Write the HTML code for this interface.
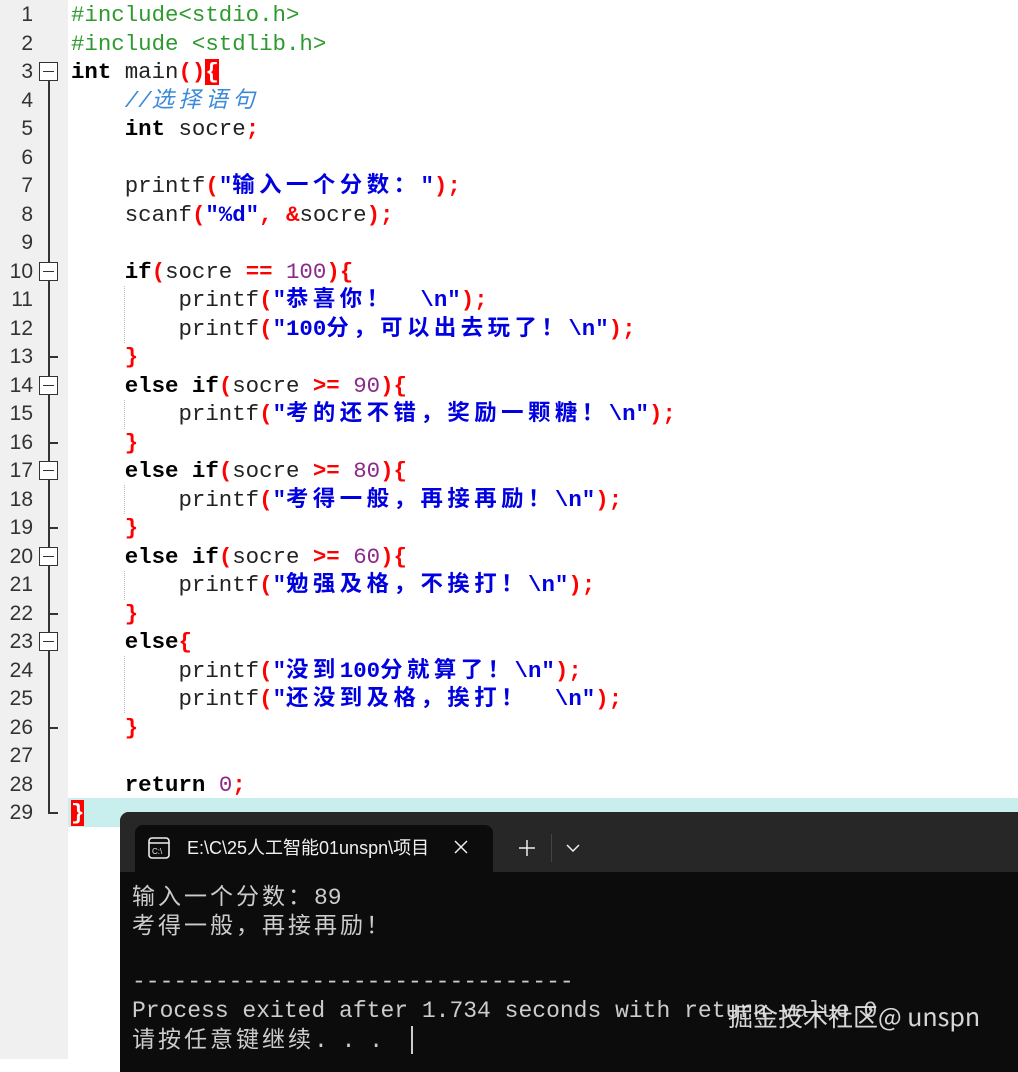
<!DOCTYPE html>
<html><head><meta charset="utf-8"><style>
*{margin:0;padding:0;box-sizing:border-box}
body{width:1018px;height:1059px;overflow:hidden;background:#fff;position:relative;font-family:"Liberation Mono","Noto Sans CJK SC",monospace}
.gut{position:absolute;left:0;top:0;width:68px;height:1059px;background:#f0f0f0}
.ln{position:absolute;left:0;width:33px;text-align:right;font:21px "Liberation Sans",sans-serif;color:#333;height:28.5px;line-height:28.5px}
.code{position:absolute;left:71px;height:28.5px;line-height:28.5px;font-size:22.4px;color:#222;white-space:pre}
.k{font-weight:bold;color:#000}
.r{color:#f00;font-weight:bold}
.n{color:#8b2a8b}
.s{color:#0000e0;font-weight:bold}
.c{font-family:"Noto Sans CJK SC",sans-serif;letter-spacing:4.5px;line-height:1}
.g{color:#2d9a2d}
.cm{color:#3a8ad8;font-style:italic}
.box{position:absolute;left:39px;width:19px;height:19px;border:1.5px solid #333;background:#fff}
.box:after{content:"";position:absolute;left:3px;right:3px;top:7.5px;height:1.5px;background:#333}
.tick{position:absolute;left:48px;width:10px;height:1.5px;background:#333}
.guide{position:absolute;left:124px;width:0;border-left:1px dotted #bbb}
.term{position:absolute;left:120px;top:812px;width:920px;height:260px;background:#0c0c0c;border-radius:9px 0 0 0;overflow:hidden}
.bar{position:absolute;left:0;top:0;right:0;height:60px;background:#272727}
.tab{position:absolute;left:15px;top:13px;width:358px;height:50px;background:#0c0c0c;border-radius:8px 8px 0 0}
.tt{position:absolute;color:#f0f0f0;font:18px "Liberation Sans","Noto Sans CJK SC",sans-serif;line-height:24px}
.tl{position:absolute;left:12px;color:#cccccc;font-size:23px;white-space:pre;line-height:29px}
.tc{font-family:"Noto Sans CJK SC",sans-serif;letter-spacing:3px;line-height:1}
</style></head><body>
<div class="gut"></div>
<div style="position:absolute;left:68px;top:798px;width:950px;height:29px;background:#c9eeee"></div>
<div style="position:absolute;left:48px;top:80px;width:1.5px;height:733px;background:#333"></div>
<div class="box" style="top:62px"></div>
<div class="box" style="top:262px"></div>
<div class="box" style="top:376px"></div>
<div class="box" style="top:461px"></div>
<div class="box" style="top:547px"></div>
<div class="box" style="top:632px"></div>
<div class="tick" style="top:356px"></div>
<div class="tick" style="top:442px"></div>
<div class="tick" style="top:527px"></div>
<div class="tick" style="top:613px"></div>
<div class="tick" style="top:727px"></div>
<div class="tick" style="top:812px"></div>
<div class="guide" style="top:286px;height:57px"></div>
<div class="guide" style="top:400px;height:29px"></div>
<div class="guide" style="top:485px;height:29px"></div>
<div class="guide" style="top:571px;height:29px"></div>
<div class="guide" style="top:656px;height:57px"></div>

<div class="ln" style="top:1px">1</div><div class="ln" style="top:29.5px">2</div><div class="ln" style="top:58px">3</div><div class="ln" style="top:86.5px">4</div><div class="ln" style="top:115px">5</div><div class="ln" style="top:143.5px">6</div><div class="ln" style="top:172px">7</div><div class="ln" style="top:200.5px">8</div><div class="ln" style="top:229px">9</div><div class="ln" style="top:257.5px">10</div><div class="ln" style="top:286px">11</div><div class="ln" style="top:314.5px">12</div><div class="ln" style="top:343px">13</div><div class="ln" style="top:371.5px">14</div><div class="ln" style="top:400px">15</div><div class="ln" style="top:428.5px">16</div><div class="ln" style="top:457px">17</div><div class="ln" style="top:485.5px">18</div><div class="ln" style="top:514px">19</div><div class="ln" style="top:542.5px">20</div><div class="ln" style="top:571px">21</div><div class="ln" style="top:599.5px">22</div><div class="ln" style="top:628px">23</div><div class="ln" style="top:656.5px">24</div><div class="ln" style="top:685px">25</div><div class="ln" style="top:713.5px">26</div><div class="ln" style="top:742px">27</div><div class="ln" style="top:770.5px">28</div><div class="ln" style="top:799px">29</div>

<div class="code g" style="top:1px">#include&lt;stdio.h&gt;</div>
<div class="code g" style="top:29.5px">#include &lt;stdlib.h&gt;</div>
<div class="code" style="top:58px"><span class="k">int</span> main<span class="r">()</span><span class="r" style="background:#f00;color:#fff">{</span></div>
<div class="code cm" style="top:86.5px">    //<span class="c" style="letter-spacing:4.5px;font-style:italic">选择语句</span></div>
<div class="code" style="top:115px">    <span class="k">int</span> socre<span class="r">;</span></div>
<div class="code" style="top:172px">    printf<span class="r">(</span><span class="s">"<span class="c">输入一个分数：</span>"</span><span class="r">);</span></div>
<div class="code" style="top:200.5px">    scanf<span class="r">(</span><span class="s">"%d"</span><span class="r">,</span> <span class="r">&amp;</span>socre<span class="r">);</span></div>
<div class="code" style="top:257.5px">    <span class="k">if</span><span class="r">(</span>socre <span class="r">==</span> <span class="n">100</span><span class="r">){</span></div>
<div class="code" style="top:286px">        printf<span class="r">(</span><span class="s">"<span class="c">恭喜你！</span>  \n"</span><span class="r">);</span></div>
<div class="code" style="top:314.5px">        printf<span class="r">(</span><span class="s">"100<span class="c">分，可以出去玩了！</span>\n"</span><span class="r">);</span></div>
<div class="code" style="top:343px">    <span class="r">}</span></div>
<div class="code" style="top:371.5px">    <span class="k">else if</span><span class="r">(</span>socre <span class="r">&gt;=</span> <span class="n">90</span><span class="r">){</span></div>
<div class="code" style="top:400px">        printf<span class="r">(</span><span class="s">"<span class="c">考的还不错，奖励一颗糖！</span>\n"</span><span class="r">);</span></div>
<div class="code" style="top:428.5px">    <span class="r">}</span></div>
<div class="code" style="top:457px">    <span class="k">else if</span><span class="r">(</span>socre <span class="r">&gt;=</span> <span class="n">80</span><span class="r">){</span></div>
<div class="code" style="top:485.5px">        printf<span class="r">(</span><span class="s">"<span class="c">考得一般，再接再励！</span>\n"</span><span class="r">);</span></div>
<div class="code" style="top:514px">    <span class="r">}</span></div>
<div class="code" style="top:542.5px">    <span class="k">else if</span><span class="r">(</span>socre <span class="r">&gt;=</span> <span class="n">60</span><span class="r">){</span></div>
<div class="code" style="top:571px">        printf<span class="r">(</span><span class="s">"<span class="c">勉强及格，不挨打！</span>\n"</span><span class="r">);</span></div>
<div class="code" style="top:599.5px">    <span class="r">}</span></div>
<div class="code" style="top:628px">    <span class="k">else</span><span class="r">{</span></div>
<div class="code" style="top:656.5px">        printf<span class="r">(</span><span class="s">"<span class="c">没到</span>100<span class="c">分就算了！</span>\n"</span><span class="r">);</span></div>
<div class="code" style="top:685px">        printf<span class="r">(</span><span class="s">"<span class="c">还没到及格，挨打！</span>  \n"</span><span class="r">);</span></div>
<div class="code" style="top:713.5px">    <span class="r">}</span></div>
<div class="code" style="top:770.5px">    <span class="k">return</span> <span class="n">0</span><span class="r">;</span></div>
<div class="code" style="top:799px"><span class="r" style="background:#f00;color:#fff">}</span></div>

<div class="term">
  <div class="bar"></div>
  <div class="tab"></div>
  <svg style="position:absolute;left:28px;top:25px" width="22" height="22" viewBox="0 0 22 22"><rect x="1" y="1" width="20" height="20" rx="3" fill="none" stroke="#eee" stroke-width="1.6"/><line x1="1" y1="6" x2="21" y2="6" stroke="#eee" stroke-width="1.4"/><text x="4" y="17" font-size="8" fill="#eee" font-family="Liberation Sans">C:\</text></svg>
  <div class="tt" style="left:67px;top:24px">E:\C\25人工智能01unspn\项目</div>
  <svg style="position:absolute;left:334px;top:28px" width="14" height="14"><path d="M1 1L13 13M13 1L1 13" stroke="#eee" stroke-width="1.5"/></svg>
  <svg style="position:absolute;left:399px;top:28px" width="16" height="16"><path d="M8 0V16M0 8H16" stroke="#eee" stroke-width="1.5"/></svg>
  <div style="position:absolute;left:431px;top:22px;width:1px;height:28px;background:#444"></div>
  <svg style="position:absolute;left:446px;top:32px" width="14" height="8"><path d="M1 1L7 7L13 1" stroke="#eee" stroke-width="1.5" fill="none"/></svg>
  <div class="tl" style="top:71px"><span class="tc">输入一个分数：</span>89</div>
  <div class="tl" style="top:100px"><span class="tc">考得一般，再接再励！</span></div>
  <div class="tl" style="top:156px">--------------------------------</div>
  <div class="tl" style="top:185px">Process exited after 1.734 seconds with return value 0</div>
  <div class="tl" style="top:214px"><span class="tc">请按任意键继续</span>. . .</div>
  <div style="position:absolute;left:291px;top:214px;width:1.5px;height:28px;background:#ccc"></div>
</div>
<div style="position:absolute;left:728px;top:998px;color:#e8e8e8;font:25px 'Noto Sans CJK SC','Liberation Sans',sans-serif;line-height:36px;opacity:.92">掘金技术社区@ unspn</div>
</body></html>
